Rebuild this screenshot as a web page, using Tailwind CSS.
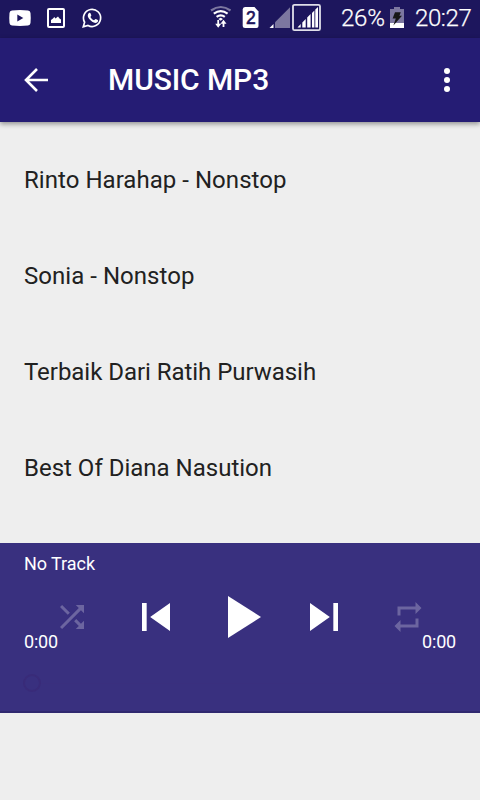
<!DOCTYPE html>
<html lang="en">
<head>
<meta charset="utf-8">
<title>Music MP3</title>
<script src="https://cdn.jsdelivr.net/npm/@tailwindcss/browser@4"></script>
</head>
<body class="bg-[#eeeeee] font-['Roboto',sans-serif]">
<div class="flex h-[800px] w-[480px] flex-col overflow-hidden">
  <div class="flex h-[38px] shrink-0 items-start bg-[#1d165d] text-white">
    <svg class="ml-[9px] h-[38px] w-[22px]" viewBox="9 0 22 38"><path fill="#fff" d="M12 10.400q8-.8 16 0 2.300.2 2.500 2.600.5 5 0 10-.2 2.400-2.500 2.600-8 .8-16 0-2.300-.2-2.500-2.600-.5-5 0-10 .2-2.400 2.500-2.600z"/><path fill="#1d165d" d="M17.300 14.500v7l6-3.500z"/></svg>
    <svg class="ml-[15px] h-[38px] w-[20px]" viewBox="46 0 20 38"><rect x="48" y="9" width="16" height="18" rx="1" fill="none" stroke="#fff" stroke-width="2"/><path fill="#fff" d="M51 23v-3l2-1.500 1.300-1.500 1.200 1.500 2.500-2 1.500 2 1.500 1V23z"/></svg>
    <svg class="ml-[15px] h-[38px] w-[22px]" viewBox="81 0 22 38"><path fill="none" stroke="#fff" stroke-width="1.700" d="M83.300 26.800l1.300-4.600a8.600 8.600 0 1 1 3.400 3.300z"/><path fill="#fff" d="M88.700 13.200c.7-.7 1.500-.6 1.800.1l.8 1.900c.2.700-.9 1.400-.9 1.900.8 1.500 2 2.600 3.600 3.200.6 0 1.200-1.400 1.800-1.200l2 1c.6.400.2 1.700-.5 2.200-1.500 1.100-3.400.6-5.100-.5-1.600-1-3-2.500-3.900-4.200-.8-1.600-.7-3.300.4-4.400z"/></svg>
    <svg class="ml-[107px] h-[38px] w-[22px]" viewBox="210 0 22 38" fill="none" stroke="#fff" stroke-width="2.200"><path stroke="#7c77a0" d="M211 10.500q9.800-7 19.500 0"/><path d="M213.800 13.600q7-5 13.800 0M216.600 16.900q4.200-3 8.200 0"/><path stroke-width="1.800" d="M218.200 20v5M223.500 27v-5"/><path fill="#fff" stroke="none" d="M215.200 23.800h6l-3 4zM220.500 23.800h6l-3-4zM218.300 19l2.400-1.300 2.300 1.300-2.300 1.700z"/></svg>
    <svg class="ml-[10px] h-[38px] w-[18px]" viewBox="242 0 18 38"><path fill="#fff" d="M245 7h9.500l4 4.500v14.500q0 2-2 2H245q-2.300 0-2.300-2V9.500Q242.700 7 245 7z"/><text x="250.900" y="24.200" text-anchor="middle" font-family="Liberation Sans" font-size="17.500" stroke="#1d165d" stroke-width=".6" fill="#1d165d">2</text></svg>
    <svg class="ml-[9px] h-[38px] w-[54px]" viewBox="269 0 54 38"><path fill="#7c77a0" d="M275 28V22.300L290 7.300V28z"/><path fill="#fff" d="M269.500 28l4-4v4zM297.500 27.500l3.200-3.500v3.500zM302.300 27.500v-5l3.400-3.500v8.500zM307.200 27.500V17.600l3.400-3.500v13.400zM312 27.500V13l2.400-2.500v17zM315.300 27.500V9.500l2.700-2.500v20.500z"/><rect x="293" y="4.800" width="27" height="25.400" rx="1.500" fill="none" stroke="#e0dfe9" stroke-width="1.800"/></svg>
    <span class="ml-[18px] w-[48px] whitespace-nowrap text-[24px] leading-[37px] font-light tracking-[-0.2px] [-webkit-text-stroke:0.25px_white]">26%</span>
    <svg class="h-[38px] w-[16px]" viewBox="389 0 16 38"><path fill="#7c77a0" d="M390 9h4V7h6v2h4v14h-14z"/><path fill="#fff" d="M390 23h14v5h-14z"/><path fill="#171717" d="M395 12.300h5.800l-1.400 3.500h2.600l-8.600 9.800 2.400-7h-3.200z"/></svg>
    <span class="ml-[10px] whitespace-nowrap text-[24px] leading-[37px] font-light tracking-[-0.4px] [-webkit-text-stroke:0.25px_white]">20:27</span>
  </div>

  <header class="z-10 flex h-[84px] shrink-0 items-center bg-[#251c74] pr-[15px] pl-[18px] text-white shadow-[0_2px_5px_rgba(0,0,0,0.4)]">
    <svg class="h-9 w-9" viewBox="0 0 36 36" fill="none" stroke="#fff" stroke-width="2.600"><path d="M30 18H8M19 7L8 18l11 11"/></svg>
    <h1 class="ml-[54px] text-[30px] leading-9 font-medium tracking-[-0.1px]">MUSIC MP3</h1>
    <svg class="ml-auto h-9 w-9" viewBox="0 0 24 24" fill="#fff"><circle cx="12" cy="6" r="2"/><circle cx="12" cy="12" r="2"/><circle cx="12" cy="18" r="2"/></svg>
  </header>

  <ul class="h-[421px] shrink-0 px-6 pt-[10px] text-[24px] text-[#212121]">
    <li class="flex h-24 items-center tracking-[0.04px]">Rinto Harahap - Nonstop</li>
    <li class="flex h-24 items-center tracking-[0.04px]">Sonia - Nonstop</li>
    <li class="flex h-24 items-center tracking-[-0.04px]">Terbaik Dari Ratih Purwasih</li>
    <li class="flex h-24 items-center">Best Of Diana Nasution</li>
  </ul>

  <section class="flex h-[170px] shrink-0 flex-col border-b-2 border-[#30286f] bg-[#39307f] px-6 pt-[10px] text-[18px] text-white">
    <div class="h-[22px] leading-[22px] tracking-[-0.05px]">No Track</div>
    <div class="mx-[6px] grid h-[84px] grid-cols-5 place-items-center">
      <svg class="h-9 w-9" viewBox="0 0 24 24" fill="#6c65a0"><path d="M10.590 9.170L5.410 4 4 5.410l5.170 5.170 1.420-1.410zM14.500 4l2.040 2.040L4 18.590 5.410 20 17.960 7.460 20 9.500V4h-5.500zm.33 9.410l-1.410 1.410 3.130 3.130L14.500 20H20v-5.500l-2.040 2.040-3.130-3.130z"/></svg>
      <svg class="h-14 w-14" viewBox="0 0 24 24" fill="#fff"><path d="M6 6h2v12H6zm3.500 6l8.500 6V6z"/></svg>
      <svg class="h-[72px] w-[72px]" viewBox="0 0 24 24" fill="#fff"><path d="M8 5v14l11-7z"/></svg>
      <svg class="h-14 w-14" viewBox="0 0 24 24" fill="#fff"><path d="M6 18l8.500-6L6 6v12zM16 6v12h2V6h-2z"/></svg>
      <svg class="h-9 w-9" viewBox="0 0 24 24" fill="#6c65a0"><path d="M7 7h10v3l4-4-4-4v3H5v6h2V7zm10 10H7v-3l-4 4 4 4v-3h12v-6h-2v4z"/></svg>
    </div>
    <div class="mt-[-28px] flex h-[22px] justify-between leading-[22px] tracking-[-0.2px]"><span>0:00</span><span>0:00</span></div>
    <div class="mt-[21px] flex h-[18px] items-center">
      <div class="-ml-px h-[18px] w-[18px] rounded-full border-2 border-[#392b79]"></div>
      <div class="h-px flex-1 bg-[#3a2f7e]"></div>
    </div>
  </section>
</div>
</body>
</html>
